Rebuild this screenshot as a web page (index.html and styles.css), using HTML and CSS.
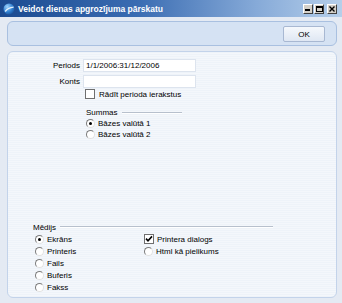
FILE: index.html
```html
<!DOCTYPE html>
<html>
<head>
    <link rel="stylesheet" href="styles.css">
</head>

<body>
<div class="window">
    <div class="titlebar">
        <svg class="title-icon" width="12" height="12" viewBox="0 0 12 12">
            <defs>
                <radialGradient id="globe" cx="0.35" cy="0.3" r="0.8">
                    <stop offset="0" stop-color="#9fd4ff"/>
                    <stop offset="0.6" stop-color="#2f7fd0"/>
                    <stop offset="1" stop-color="#164b93"/>
                </radialGradient>
            </defs>
            <circle cx="6" cy="6" r="5.5" fill="url(#globe)"/>
            <path d="M2.2 8.5 C4 6 7 4.6 10.6 4.2" stroke="#fff" stroke-width="1.3" fill="none" opacity="0.85"/>
        </svg>
        <span class="title">Veidot dienas apgrozījuma pārskatu</span>
        <div class="controls">
            <div class="ctl">
                <svg width="6" height="5" viewBox="0 0 6 5"><rect x="0" y="3" width="5" height="2" fill="#000"/></svg>
            </div>
            <div class="ctl">
                <svg width="7" height="6" viewBox="0 0 7 6"><rect x="0.5" y="0.5" width="6" height="5" fill="none" stroke="#000"/><rect x="0" y="0" width="7" height="2" fill="#000"/></svg>
            </div>
            <div class="ctl close">
                <svg width="6" height="6" viewBox="0 0 6 6"><path d="M0.5 0.5 L5.5 5.5 M5.5 0.5 L0.5 5.5" stroke="#000" stroke-width="1.4"/></svg>
            </div>
        </div>
    </div>

    <div class="content">
        <div class="toolbar">
            <a href="#" class="ok">OK</a>
        </div>

        <div class="panel">
            <div class="fields">
                <span class="field-label">Periods</span>
                <input class="field-input" type="text" value="1/1/2006:31/12/2006">
                <span class="field-label">Konts</span>
                <input class="field-input" type="text" value="">
            </div>

            <div class="check-row show-rows">
                <span class="checkbox"></span>
                <span>Rādīt perioda ierakstus</span>
            </div>

            <div class="group sums">
                <div class="group-head">
                    <span>Summas</span>
                    <span class="rule"></span>
                </div>
                <div class="option"><span class="radio on"></span><span>Bāzes valūtā 1</span></div>
                <div class="option"><span class="radio"></span><span>Bāzes valūtā 2</span></div>
            </div>

            <div class="group media">
                <div class="group-head">
                    <span>Mēdijs</span>
                    <span class="rule"></span>
                </div>
                <div class="media-cols">
                    <div class="media-col first">
                        <div class="option tall"><span class="radio on"></span><span>Ekrāns</span></div>
                        <div class="option tall"><span class="radio"></span><span>Printeris</span></div>
                        <div class="option tall"><span class="radio"></span><span>Fails</span></div>
                        <div class="option tall"><span class="radio"></span><span>Buferis</span></div>
                        <div class="option tall"><span class="radio"></span><span>Fakss</span></div>
                    </div>
                    <div class="media-col">
                        <div class="option tall">
                            <span class="checkbox">
                                <svg width="8" height="8" viewBox="0 0 8 8"><path d="M1 3.6 L3 5.8 L7 1.4" stroke="#000" stroke-width="1.6" fill="none"/></svg>
                            </span>
                            <span>Printera dialogs</span>
                        </div>
                        <div class="option tall"><span class="radio"></span><span>Html kā pielikums</span></div>
                    </div>
                </div>
            </div>
        </div>
    </div>
</div>
</body>
</html>
```

FILE: styles.css
```css
body, html {
margin: 0;
padding: 0;
}

body {
width: 342px;
height: 303px;
font-family: "Liberation Sans", Arial, sans-serif;
font-size: 8px;
color: #000;
}

.window {
height: 303px;
display: flex;
flex-direction: column;
background-color: #e4eaf3;
}

.titlebar {
height: 17px;
flex: none;
display: flex;
align-items: center;
padding: 0 5px 0 3px;
background: linear-gradient(to right, #1b4a90, #3a6cb2 40%, #86aad8 75%, #b6cfea);
}

.title-icon {
margin-right: 3px;
flex: none;
}

.title {
flex: 1;
color: #fff;
font-weight: bold;
font-size: 8.5px;
}

.controls {
display: flex;
gap: 1px;
}

.ctl {
width: 10px;
height: 10px;
box-sizing: border-box;
background-color: #d4d0c8;
border: 1px solid;
border-color: #fff #404040 #404040 #fff;
display: flex;
align-items: center;
justify-content: center;
}

.ctl.close {
margin-left: 2px;
}

.content {
flex: 1;
display: flex;
flex-direction: column;
gap: 5px;
padding: 4px 5px 5px 7px;
min-height: 0;
}

.toolbar {
height: 25px;
flex: none;
box-sizing: border-box;
border: 1px solid #a9c0e0;
border-radius: 6px;
background-color: #d5e2f3;
display: flex;
justify-content: flex-end;
align-items: center;
padding: 1px 11px 0 0;
}

.ok {
width: 42px;
height: 16px;
box-sizing: border-box;
border: 1px solid #a8b8d2;
border-radius: 2px;
background: linear-gradient(#f5f8fc, #dfe7f3);
display: flex;
align-items: center;
justify-content: center;
color: #000;
text-decoration: none;
font-size: 8px;
}

.panel {
flex: 1;
border: 1px solid #c3d3ea;
border-radius: 6px;
background: repeating-linear-gradient(#eef3f9 0, #eef3f9 1px, #f4f7fb 1px, #f4f7fb 2px);
display: flex;
flex-direction: column;
padding: 7px 0 4px;
}

.fields {
display: grid;
grid-template-columns: 72px 113px;
column-gap: 3px;
row-gap: 3px;
align-items: center;
}

.field-label {
text-align: right;
}

.field-input {
height: 13px;
box-sizing: border-box;
margin: 0;
border: 1px solid #dde4ee;
background-color: #fff;
padding: 0 2px;
font-family: "Liberation Sans", Arial, sans-serif;
font-size: 8px;
color: #000;
outline: none;
}

.check-row {
display: flex;
align-items: center;
gap: 4px;
}

.show-rows {
margin: 1px 0 0 77px;
height: 10px;
}

.checkbox {
width: 10px;
height: 10px;
flex: none;
box-sizing: border-box;
border: 1px solid #6f6f6f;
background-color: #fff;
display: flex;
align-items: center;
justify-content: center;
}

.group-head {
display: flex;
align-items: center;
gap: 4px;
height: 11px;
}

.rule {
flex: 1;
height: 0;
border-top: 1px solid #b7c0cd;
border-bottom: 1px solid #fff;
}

.sums {
width: 96px;
margin: 8px 0 0 78px;
}

.option {
display: flex;
align-items: center;
gap: 3px;
height: 11px;
}

.option.tall {
height: 12px;
}

.radio {
width: 9px;
height: 9px;
flex: none;
box-sizing: border-box;
border-radius: 50%;
border: 1px solid;
border-color: #7c7c7c #e2e2e2 #e2e2e2 #7c7c7c;
background-color: #fff;
display: flex;
align-items: center;
justify-content: center;
}

.radio.on::after {
content: "";
width: 3px;
height: 3px;
border-radius: 50%;
background-color: #000;
}

.media {
margin: auto 0 0 25px;
width: 240px;
}

.media .group-head {
height: 12px;
}

.media-cols {
display: flex;
padding-left: 2px;
}

.media-col.first {
width: 109px;
}
```
